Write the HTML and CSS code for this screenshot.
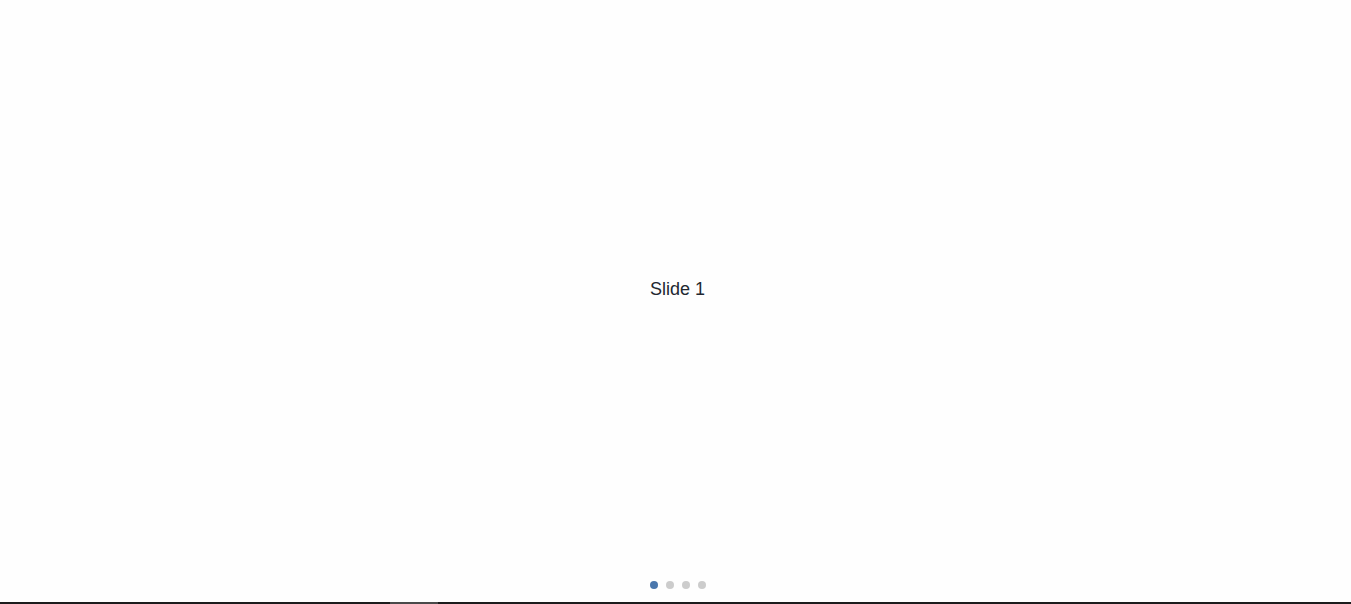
FILE: index.html
```html
<!DOCTYPE html>
<html lang="en">
<head>
<meta charset="utf-8">
<title>Slider</title>
<link rel="stylesheet" href="styles.css">
</head>
<body>
<div class="slider">
  <div class="slide">Slide 1</div>
  <div class="dots">
    <span class="dot active"></span>
    <span class="dot"></span>
    <span class="dot"></span>
    <span class="dot"></span>
  </div>
</div>
<div class="track"><div class="thumb"></div></div>
</body>
</html>
```

FILE: styles.css
```css
html, body {
  margin: 0;
  padding: 0;
  background: #fefefe;
  overflow: hidden;
}
.slider {
  height: 602px;
  display: flex;
  flex-direction: column;
  align-items: center;
  font-family: "Liberation Sans", Arial, sans-serif;
}
.slide {
  flex: 1;
  display: flex;
  align-items: center;
  justify-content: center;
  padding-bottom: 2px;
  padding-left: 4px;
  font-size: 18px;
  color: #222831;
}
.dots {
  display: flex;
  gap: 8px;
  height: 8px;
  margin-bottom: 13px;
  margin-left: 5px;
}
.dot {
  width: 8px;
  height: 8px;
  border-radius: 50%;
  background: #cccccc;
}
.dot.active {
  background: #4a77ac;
}
.track {
  height: 2px;
  background: #1c1c1c;
  padding-left: 390px;
}
.thumb {
  width: 48px;
  height: 2px;
  background: #4a4a4a;
}
```
